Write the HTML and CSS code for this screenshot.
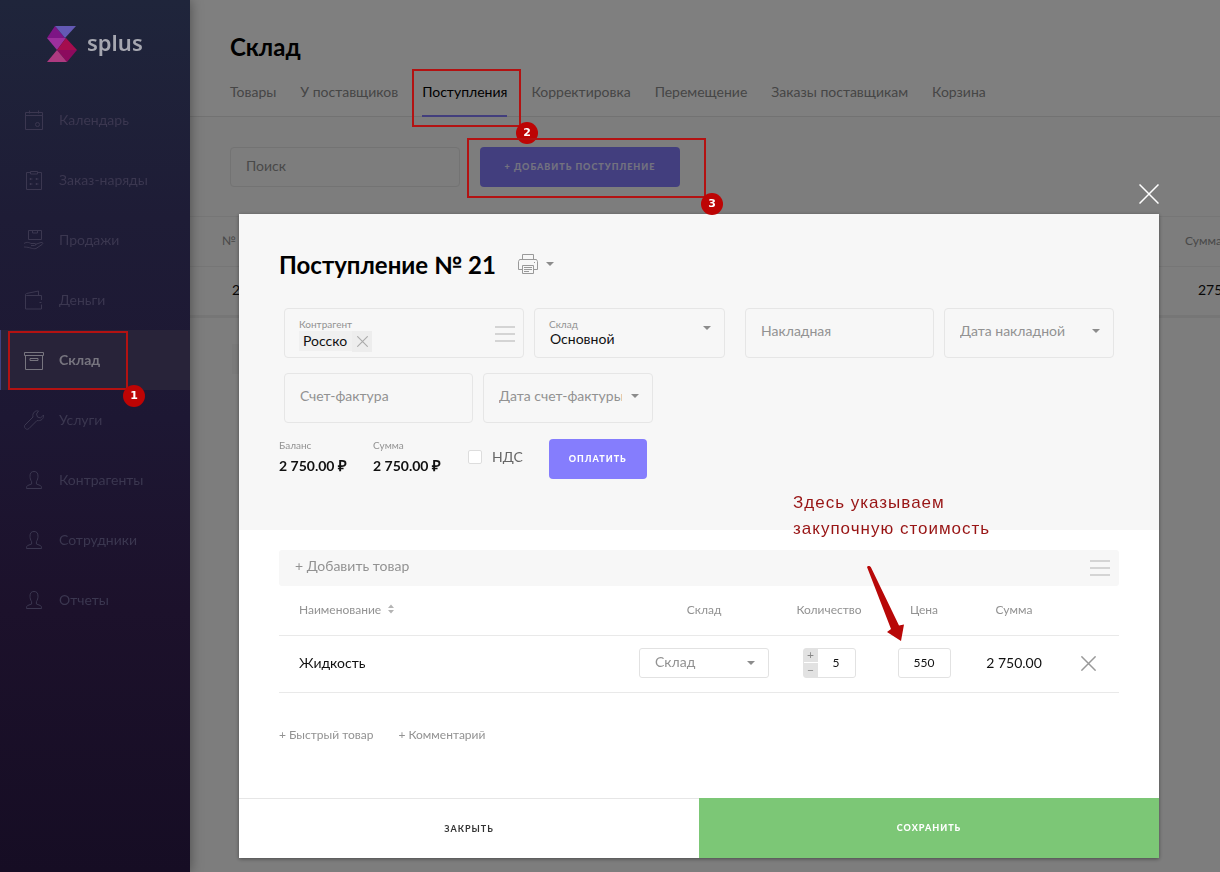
FILE: index.html
```html
<!DOCTYPE html>
<html lang="ru">
<head>
<meta charset="utf-8">
<title>Склад — splus</title>
<meta name="viewport" content="width=device-width, initial-scale=1">
<link rel="stylesheet" href="styles.css">
</head>
<body>
<svg class="sprite" aria-hidden="true">
  <symbol id="person" viewBox="0 0 20 20"><path d="M7.600 11.600C6.500 10 6 8 6 6.200 6 3 7.300 1.500 10 1.500s4 1.500 4 4.700c0 1.800-.5 3.800-1.600 5.400v2.400l3.900 1.500c.8.400 1.200 1 1.200 3H2.500c0-2 .4-2.600 1.200-3L7.600 14z"/></symbol>
  <symbol id="cross" viewBox="0 0 20 20"><path d="M.5.5l19 19M19.500.5l-19 19"/></symbol>
</svg>

<div class="app">
  <aside class="sidebar">
    <a class="logo" href="#">
      <svg class="logo-mark" viewBox="0 0 30 36" aria-hidden="true">
        <path fill="#7d1585" d="M8 0l10 12H0z"/>
        <path fill="#6359b4" d="M8 0h21L18 12z"/>
        <path fill="#9c2f9c" d="M0 12h19l-9 12z"/>
        <path fill="#a50d4e" d="M19 12l11 12H10z"/>
        <path fill="#8c0a5e" d="M10 24h20L20 36z"/>
        <path fill="#ad3a80" d="M10 24l10 12H0z"/>
      </svg>
      <span>splus</span>
    </a>
    <nav class="menu">
      <a href="#"><svg viewBox="0 0 20 20"><path d="M1.500 2.500h17v17h-17zM1.500 5.500h17M5.500.5v3M14.500.5v3"/><circle cx="13.500" cy="14.500" r="2"/></svg>Календарь</a>
      <a href="#"><svg viewBox="0 0 20 20"><path d="M7 2.500H2.500v17h15v-17H13M6.500 1.500h7v2.500h-7zM5.500 9h3M11.500 9h3M5.500 14h3M11.500 14h3M6.500 8v2M12.500 8v2M6.500 13v2M12.500 13v2"/></svg>Заказ-наряды</a>
      <a href="#"><svg viewBox="0 0 20 20"><path d="M4.500.5h13v9h-13zM8.500.5v2.500h5V.5M0 13.500c3-2 5-1 7 0h4c1.500.5 1 2-.5 2H7M11 14.500l6-2c2-.5 2.500 1 1 2l-6 4c-3 1-6-1.500-12-1.500"/></svg>Продажи</a>
      <a href="#"><svg viewBox="0 0 20 20"><path d="M17.500 10V5.500h-15c-1.500 0-1.500-1.500 0-2l12-2.500v4M1.500 5v14h16v-4.500M15.500 12.500h2"/></svg>Деньги</a>
      <a href="#" class="active" aria-current="page"><svg viewBox="0 0 20 20"><path d="M.5 2.500h19v3H.5zM1.500 5.500h17v14h-17zM6 8.500h8v2H6z"/></svg>Склад</a>
      <a href="#"><svg viewBox="0 0 20 20"><path d="M14.500 1c-3-1-6.500 2-5.500 6l-8 8c-2 2 1.500 6 4 3.500l8-8c4 1 7-2 6.500-5.500l-3 3-3-1-1-3z"/></svg>Услуги</a>
      <a href="#"><svg><use href="#person"/></svg>Контрагенты</a>
      <a href="#"><svg><use href="#person"/></svg>Сотрудники</a>
      <a href="#"><svg><use href="#person"/></svg>Отчеты</a>
    </nav>
  </aside>

  <main class="page">
    <header class="page-head">
      <h1>Склад</h1>
      <nav class="tabs">
        <a href="#">Товары</a>
        <a href="#">У поставщиков</a>
        <a href="#" class="active">Поступления</a>
        <a href="#">Корректировка</a>
        <a href="#">Перемещение</a>
        <a href="#">Заказы поставщикам</a>
        <a href="#">Корзина</a>
      </nav>
    </header>
    <div class="toolbar">
      <input class="search" type="search" placeholder="Поиск" aria-label="Поиск">
      <button class="btn btn-add" type="button">+ Добавить поступление</button>
    </div>
    <table class="receipts">
      <thead><tr><th>№</th><th class="sum">Сумма</th></tr></thead>
      <tbody><tr><td>2</td><td class="sum">275</td></tr></tbody>
    </table>
    <div class="pager"></div>
  </main>
</div>

<div class="overlay">
  <section class="modal" role="dialog" aria-labelledby="modal-title">
    <button class="modal-close" type="button" aria-label="Закрыть окно"><svg><use href="#cross"/></svg></button>
    <div class="modal-top">
      <div class="title-row">
        <h2 id="modal-title">Поступление № 21</h2>
        <button class="print" type="button" aria-label="Печать">
          <svg viewBox="0 0 20 20"><path d="M4.500 5.500v-5h11v5M4.500 15.500h-4v-8l1-2h17l1 2v8h-4M4.500 11.500h11v8h-11zM6 13.500h8M6 15.500h8M6 17.500h5M16 8.500h1"/></svg>
          <span class="caret"></span>
        </button>
      </div>
      <div class="fields">
        <div class="field w240 labelled">
          <div class="field-main">
            <span class="field-label">Контрагент</span>
            <span class="tag">Росско<button type="button" aria-label="Убрать"><svg><use href="#cross"/></svg></button></span>
          </div>
          <button class="burger" type="button" aria-label="Список"><i></i><i></i><i></i></button>
        </div>
        <div class="field w191 labelled store">
          <div class="field-main">
            <label class="field-label" for="store">Склад</label>
            <select id="store"><option>Основной</option></select>
          </div>
          <span class="caret"></span>
        </div>
        <div class="field w189 gap-left"><input type="text" placeholder="Накладная" aria-label="Накладная"></div>
        <div class="field w170"><select aria-label="Дата накладной"><option>Дата накладной</option></select><span class="caret"></span></div>
        <div class="field w189"><input type="text" placeholder="Счет-фактура" aria-label="Счет-фактура"></div>
        <div class="field w170"><select aria-label="Дата счет-фактуры"><option>Дата счет-фактуры</option></select><span class="caret"></span></div>
      </div>
      <div class="totals">
        <div class="total"><span>Баланс</span><b>2 750.00 <em>₽</em></b></div>
        <div class="total"><span>Сумма</span><b>2 750.00 <em>₽</em></b></div>
        <label class="vat"><input type="checkbox">НДС</label>
        <button class="btn" type="button">Оплатить</button>
      </div>
    </div>

    <div class="modal-body">
      <div class="add-bar">
        <input type="text" placeholder="+ Добавить товар" aria-label="Добавить товар">
        <button class="burger" type="button" aria-label="Список"><i></i><i></i><i></i></button>
      </div>
      <table class="items">
        <colgroup><col><col class="c-store"><col class="c-qty"><col class="c-price"><col class="c-sum"><col class="c-del"></colgroup>
        <thead>
          <tr>
            <th class="name">Наименование <svg class="sort" viewBox="0 0 6 10"><path d="M0 4l3-3.500L6 4zM0 6l3 3.500L6 6z"/></svg></th>
            <th>Склад</th><th>Количество</th><th>Цена</th><th>Сумма</th><th></th>
          </tr>
        </thead>
        <tbody>
          <tr>
            <td class="name">Жидкость</td>
            <td><div class="mini mini-select"><select aria-label="Склад"><option>Склад</option></select><span class="caret"></span></div></td>
            <td><div class="mini qty"><span class="steps"><button type="button">+</button><button type="button">−</button></span><input type="text" value="5" aria-label="Количество"></div></td>
            <td><div class="mini price"><input type="text" value="550" aria-label="Цена"></div></td>
            <td>2 750.00</td>
            <td class="del-cell"><button class="del" type="button" aria-label="Удалить"><svg><use href="#cross"/></svg></button></td>
          </tr>
        </tbody>
      </table>
      <div class="links"><a href="#">+ Быстрый товар</a><a href="#">+ Комментарий</a></div>
    </div>

    <footer class="modal-foot">
      <button class="foot-close" type="button">Закрыть</button>
      <button class="foot-save" type="button">Сохранить</button>
    </footer>
  </section>
</div>

<div class="marks">
  <div class="mark mark-1"><span>1</span></div>
  <div class="mark mark-2"><span>2</span></div>
  <div class="mark mark-3"><span>3</span></div>
  <p class="note">Здесь указываем<br>закупочную стоимость</p>
  <svg class="arrow" viewBox="0 0 40 78"><path fill="#b80808" d="M3 3C3.500 1.500 6 1.500 6.800 3L35 61.500l5-1-3 16.500L23 68l4-3z"/></svg>
</div>
</body>
</html>
```

FILE: styles.css
```css
* { box-sizing: border-box; }
body {
  margin: 0;
  font: 14px/20px Lato, "Noto Sans", sans-serif;
  color: #111;
  background: #fafafa;
  overflow: hidden;
}
a { color: inherit; text-decoration: none; }
button, input, select { font: inherit; color: inherit; }
button { padding: 0; border: 0; background: none; cursor: pointer; }
input, select { min-width: 0; border: 0; outline: 0; background: none; appearance: none; }
svg { display: block; fill: none; stroke: currentColor; }
.sprite { position: absolute; width: 0; height: 0; }

.app { display: flex; min-height: 100vh; }

/* Sidebar */
.sidebar {
  flex: 0 0 190px;
  position: relative;
  z-index: 3;
  background: linear-gradient(#1f253b 0, #1e1c36 25%, #1d1733 48%, #1c112b 70%, #160d24 100%);
  box-shadow: 0 0 12px rgba(0, 0, 0, .4);
}
.logo {
  display: flex;
  align-items: center;
  gap: 10px;
  height: 90px;
  padding: 0 0 2px 47px;
  color: #a6a7b0;
  font: 600 22px/32px "Noto Sans", sans-serif;
}
.logo-mark { width: 30px; height: 36px; stroke: none; }
.logo span { padding-bottom: 5px; }
.menu a {
  display: flex;
  align-items: center;
  gap: 15px;
  height: 60px;
  padding-left: 24px;
  color: #3b3750;
}
.menu svg { width: 20px; height: 20px; }
.menu .active {
  background: #282339;
  box-shadow: inset 1px 0 #3f4280;
  color: #77757f;
  font-weight: 700;
}

/* Page behind the dialog */
.page { flex: 1; min-width: 0; overflow: hidden; }
.page-head {
  height: 117px;
  padding: 31px 40px 0;
  background: #fff;
  border-bottom: 1px solid #e4e4e4;
}
h1, h2 { margin: 0; font-size: 24px; line-height: 32px; color: #000; }
.tabs { display: flex; gap: 24px; margin-top: 19px; color: #8c8c8c; white-space: nowrap; }
.tabs a { height: 35px; }
.tabs .active { color: #000; border-bottom: 2px solid #857dfb; }
.toolbar { display: flex; gap: 20px; padding: 30px 40px 29px; }
.search {
  width: 230px;
  height: 40px;
  padding: 0 15px 4px;
  border: 1px solid #e6e6e6;
  border-radius: 4px;
}
::placeholder { color: #929292; opacity: 1; }
.btn {
  height: 40px;
  padding: 0 20px;
  border-radius: 4px;
  background: #857dfd;
  color: #fff;
  font-size: 9px;
  font-weight: 900;
  letter-spacing: 1px;
  text-transform: uppercase;
}
.btn-add { width: 200px; padding: 0; color: #e6e4ff; }
.receipts { width: 100%; border-collapse: collapse; table-layout: fixed; }
.receipts tr { height: 50px; border: solid #ececec; border-width: 1px 0; }
.receipts tbody tr { border-bottom-width: 3px; }
.receipts th { padding: 0 0 2px 32px; text-align: left; font-size: 12px; font-weight: 400; color: #929292; }
.receipts td { padding: 0 0 2px 42px; }
.receipts .sum { width: 35px; padding-left: 0; white-space: nowrap; }
.receipts td.sum { padding-left: 13px; }
.pager { width: 200px; height: 30px; margin: 26px 0 0 42px; background: #f4f4f4; }

/* Dialog */
.overlay {
  position: fixed;
  inset: 0;
  z-index: 2;
  padding: 214px 61px 14px 239px;
  background: rgba(0, 0, 0, .5);
}
.modal {
  position: relative;
  display: flex;
  flex-direction: column;
  min-height: 100%;
  background: #fff;
  box-shadow: 0 1px 4px rgba(0, 0, 0, .4);
}
.modal-close { position: absolute; right: 0; top: -30px; color: #fff; }
.modal-close svg { width: 20px; height: 20px; stroke-width: 1.500; }
.modal-top { min-height: 316px; padding: 35px 40px; background: #f7f7f7; }
.title-row { display: flex; align-items: center; gap: 22px; }
.print { display: flex; align-items: center; gap: 8px; padding-bottom: 2px; color: #999; }
.print svg { width: 20px; height: 20px; }
.caret { width: 0; height: 0; border: 4px solid transparent; border-top-color: #8c8c8c; border-bottom: 0; }

.fields { display: flex; flex-wrap: wrap; gap: 15px 10px; margin: 27px 0 15px; padding: 0 5px; }
.field {
  display: flex;
  align-items: center;
  height: 50px;
  padding: 0 13px 4px 15px;
  border: 1px solid #e6e6e6;
  border-radius: 4px;
  color: #929292;
}
.field > input, .field > select { flex: 1; width: 0; padding: 0; }
.field > select { margin-right: 9px; }
.w240 { width: 240px; }
.w191 { width: 191px; }
.w189 { width: 189px; }
.w170 { width: 170px; }
.gap-left { margin-left: 10px; }
.labelled { padding: 2px 8px 0 14px; }
.labelled.store { padding-right: 13px; }
.field-main { flex: 1; }
.store .caret { margin-bottom: 12px; }
.field-label { display: block; font-size: 10px; line-height: 14px; }
.field-main select { display: block; width: 100%; height: 20px; padding: 0 0 4px 1px; color: #111; line-height: 16px; }
.tag { display: flex; align-items: center; gap: 5px; width: max-content; height: 20px; padding-left: 4px; background: #f0f0f0; color: #111; }
.tag button { padding: 5px 4px 5px 5px; background: #ededed; color: #aaa; }
.tag svg { width: 11px; height: 11px; stroke-width: 2; }
.burger { display: grid; gap: 5px; width: 20px; }
.burger i { height: 2px; background: #d4d4d4; }

.totals { display: flex; align-items: center; }
.total { width: 94px; }
.total span { display: block; font-size: 10px; line-height: 14px; color: #929292; }
.total b { display: block; line-height: 28px; white-space: nowrap; }
.total em { font: 700 15px/16px "Liberation Serif", serif; }
.vat { display: flex; align-items: center; gap: 10px; height: 40px; margin-right: 26px; padding: 0 0 4px 1px; color: #666; }
.vat input { width: 14px; height: 14px; margin: 0; border: 1px solid #ddd; border-radius: 2px; background: #fff; }

.modal-body { flex: 1; padding: 20px 40px; }
.add-bar { display: flex; align-items: center; height: 36px; padding: 0 9px 0 16px; background: #f7f7f7; border-radius: 3px; }
.add-bar input { flex: 1; padding: 0 0 4px; }
.items { width: 100%; border-collapse: collapse; table-layout: fixed; }
.items tr { border-bottom: 1px solid #e9e9e9; }
.items th { height: 49px; padding: 0 0 1px; font-size: 12px; font-weight: 400; color: #929292; }
.items td { height: 57px; padding: 0 0 2px; text-align: center; }
.items .name { padding-left: 20px; text-align: left; }
.c-store { width: 160px; }
.c-qty { width: 90px; }
.c-price { width: 100px; }
.c-sum { width: 80px; }
.c-del { width: 65px; }
.sort { display: inline-block; width: 6px; height: 10px; margin-left: 4px; fill: #b4b4b4; stroke: none; }
.mini {
  display: flex;
  align-items: center;
  width: 53px;
  height: 30px;
  margin: 0 auto;
  border: 1px solid #e2e2e2;
  border-radius: 3px;
  font-size: 12px;
}
.mini input { width: 100%; padding: 0; text-align: center; }
.mini-select { width: 130px; padding: 0 13px 0 15px; color: #929292; font-size: 14px; }
.mini-select select { flex: 1; padding: 0 0 2px; }
.steps { display: grid; gap: 1px; flex: 0 0 14px; height: 28px; color: #888; }
.steps button { background: #e2e2e2; line-height: 12px; }
.items .del-cell { padding-left: 3px; }
.del { color: #999; vertical-align: middle; }
.del svg { width: 15px; height: 15px; stroke-width: 2; }
.links { display: flex; gap: 25px; margin-top: 32px; font-size: 12px; color: #929292; }

.modal-foot { display: grid; grid-template-columns: 1fr 1fr; height: 60px; }
.modal-foot button { font-size: 9px; font-weight: 700; letter-spacing: 1px; text-transform: uppercase; }
.foot-close { border-top: 1px solid #e6e6e6; color: #333; }
.foot-save { background: #7cc776; color: #fff; }
.modal-foot .foot-save { font-weight: 900; }

/* Guide marks drawn over the interface */
.marks { position: absolute; inset: 0; z-index: 4; pointer-events: none; }
.mark { position: absolute; border: 2px solid #b31212; }
.mark span {
  position: absolute;
  right: -19px;
  bottom: -19px;
  width: 22px;
  height: 22px;
  border-radius: 50%;
  background: #bd0404;
  color: #fff;
  font: 700 11px/22px "DejaVu Sans", sans-serif;
  text-align: center;
}
.mark-1 { left: 8px; top: 331px; width: 120px; height: 59px; }
.mark-2 { left: 412px; top: 69px; width: 109px; height: 58px; }
.mark-3 { left: 467px; top: 138px; width: 239px; height: 60px; }
.note {
  position: absolute;
  left: 793px;
  top: 490px;
  margin: 0;
  color: #981414;
  font: 17px/26px "Liberation Sans", sans-serif;
  letter-spacing: 1px;
  white-space: nowrap;
}
.arrow { position: absolute; left: 864px; top: 564px; width: 40px; height: 78px; stroke: none; }
```
